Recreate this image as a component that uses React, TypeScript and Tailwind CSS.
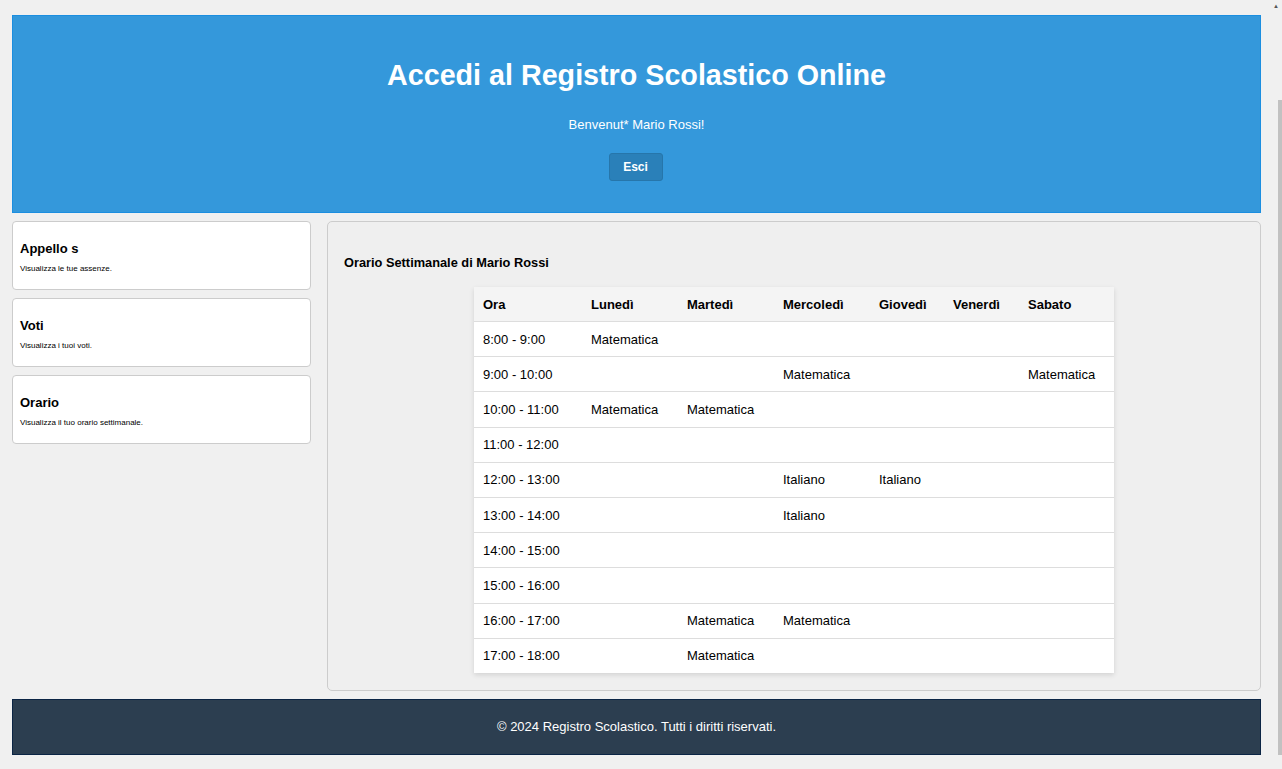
import React from "react";

const rows: [string, string[]][] = [
  ["8:00 - 9:00", ["Matematica", "", "", "", "", ""]],
  ["9:00 - 10:00", ["", "", "Matematica", "", "", "Matematica"]],
  ["10:00 - 11:00", ["Matematica", "Matematica", "", "", "", ""]],
  ["11:00 - 12:00", ["", "", "", "", "", ""]],
  ["12:00 - 13:00", ["", "", "Italiano", "Italiano", "", ""]],
  ["13:00 - 14:00", ["", "", "Italiano", "", "", ""]],
  ["14:00 - 15:00", ["", "", "", "", "", ""]],
  ["15:00 - 16:00", ["", "", "", "", "", ""]],
  ["16:00 - 17:00", ["", "Matematica", "Matematica", "", "", ""]],
  ["17:00 - 18:00", ["", "Matematica", "", "", "", ""]],
];

const days = ["Ora", "Lunedì", "Martedì", "Mercoledì", "Giovedì", "Venerdì", "Sabato"];
const widths = ["w-[108px]", "w-[96px]", "w-[96px]", "w-[96px]", "w-[74px]", "w-[75px]", "w-[95px]"];

function Card({ title, desc }: { title: string; desc: string }) {
  return (
    <div className="h-[69px] bg-white border border-[#cccccc] rounded-[4px] px-[7px] flex flex-col justify-center">
      <div className="text-[13px] font-bold text-black leading-[16px] mt-[4px]">{title}</div>
      <div className="text-[8px] text-black leading-[10px] mt-[7px]">{desc}</div>
    </div>
  );
}

export default function App() {
  return (
    <div className="flex w-[1282px] h-[769px] bg-[#f0f0f0] overflow-hidden" style={{ fontFamily: '"Liberation Sans", Arial, sans-serif' }}>
      <div className="w-[1270px] flex flex-col pl-[12px] pr-[9px] pt-[15px]">
        <header className="h-[198px] bg-[#3498db] border border-[#1b8ee0] flex flex-col items-center text-white">
          <h1 className="mt-[42px] text-[28.7px] font-bold leading-[34px]">Accedi al Registro Scolastico Online</h1>
          <p className="mt-[25px] text-[13px] leading-[15px]">Benvenut* Mario Rossi!</p>
          <button className="mt-[21px] w-[54px] h-[28px] -translate-x-[1px] bg-[#2a80b9] border border-[#2676ab] rounded-[3px] text-[12px] font-bold text-white">Esci</button>
        </header>
        <div className="flex gap-[16px] mt-[8px]">
          <aside className="w-[299px] flex flex-col gap-[8px]">
            <Card title="Appello s" desc="Visualizza le tue assenze." />
            <Card title="Voti" desc="Visualizza i tuoi voti." />
            <Card title="Orario" desc="Visualizza il tuo orario settimanale." />
          </aside>
          <main className="flex-1 h-[470px] border border-[#cccccc] rounded-[5px] bg-[#efefef] px-[16px]">
            <h2 className="mt-[33px] text-[12.8px] font-bold text-black leading-[16px]">Orario Settimanale di Mario Rossi</h2>
            <div className="flex justify-center mt-[16px]">
              <table className="w-[640px] border-collapse bg-white shadow-[0_2px_5px_rgba(0,0,0,0.12)] text-[13px] text-black">
                <thead>
                  <tr className="bg-[#f4f4f4]">
                    {days.map((d, i) => (
                      <th key={d} className={`${widths[i]} text-left font-bold pl-[9px] py-[9.5px] leading-[15px] border-b border-[#dddddd]`}>{d}</th>
                    ))}
                  </tr>
                </thead>
                <tbody>
                  {rows.map(([h, cells], ri) => (
                    <tr key={h}>
                      <td className={`pl-[9px] py-[9.6px] leading-[15px] ${ri < rows.length - 1 ? "border-b border-[#dddddd]" : ""}`}>{h}</td>
                      {cells.map((c, ci) => (
                        <td key={ci} className={`pl-[9px] py-[9.6px] leading-[15px] ${ri < rows.length - 1 ? "border-b border-[#dddddd]" : ""}`}>{c}</td>
                      ))}
                    </tr>
                  ))}
                </tbody>
              </table>
            </div>
          </main>
        </div>
        <footer className="mt-[8px] h-[56px] bg-[#2c3e50] border border-[#0b2545] flex items-center justify-center text-white text-[13px]">
          © 2024 Registro Scolastico. Tutti i diritti riservati.
        </footer>
      </div>
      <div className="w-[12px] h-full flex flex-col items-end">
        <div className="w-full h-[12px] flex items-center justify-center text-[6px] text-[#555]">▲</div>
        <div className="w-[4px] h-[655px] bg-[#c1c1c1] mt-[88px]" />
      </div>
    </div>
  );
}
